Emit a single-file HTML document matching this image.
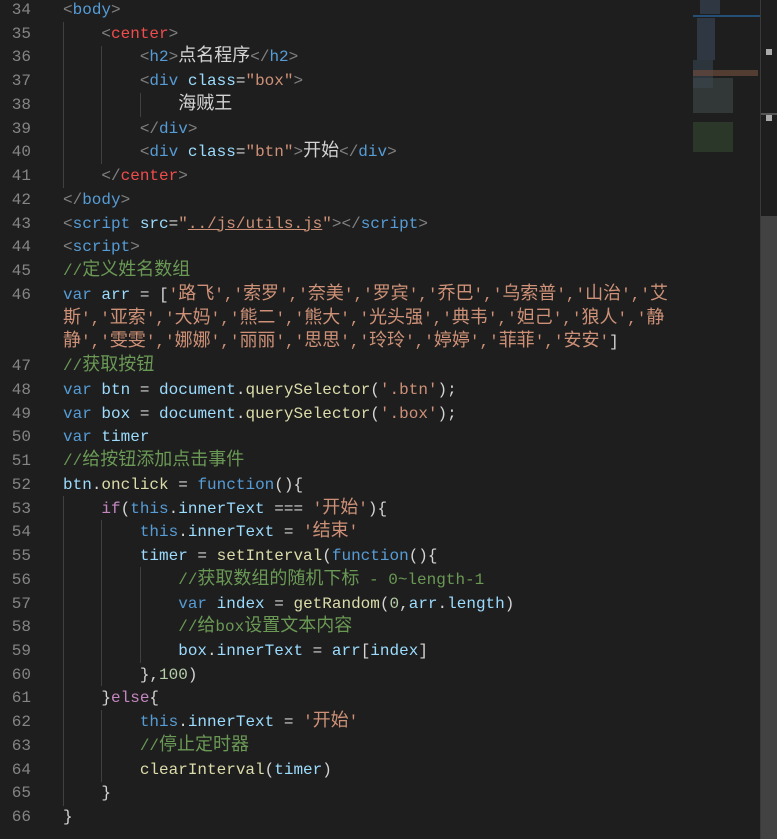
<!DOCTYPE html>
<html><head><meta charset="utf-8"><style>
html,body{margin:0;padding:0;background:#1e1e1e;width:777px;height:839px;overflow:hidden}
.r{position:absolute;left:0;height:23.74px;line-height:23.74px;white-space:pre;font-family:"Liberation Mono",monospace;font-size:16px;color:#d4d4d4;overflow:visible}
.n{position:absolute;left:0;width:31px;text-align:right;color:#858585}
.t{position:absolute;left:63px}
i{font-style:normal;font-family:"Noto Sans CJK SC",sans-serif;font-size:18px;letter-spacing:0;line-height:0;vertical-align:baseline}
.g{color:#808080}.b{color:#569cd6}.a{color:#9cdcfe}.s{color:#ce9178}.red{color:#f14c4c}.c{color:#6a9955}.f{color:#dcdcaa}.k{color:#c586c0}.m{color:#b5cea8}.w{color:#d4d4d4}
.u{text-decoration:underline}
.ig{position:absolute;width:1px;background:#404040}
</style></head><body>
<div class="ig" style="left:63px;top:22px;height:166px"></div>
<div class="ig" style="left:101px;top:46px;height:118px"></div>
<div class="ig" style="left:140px;top:93px;height:24px"></div>
<div class="ig" style="left:63px;top:496px;height:310px"></div>
<div class="ig" style="left:101px;top:520px;height:166px"></div>
<div class="ig" style="left:101px;top:710px;height:72px"></div>
<div class="ig" style="left:140px;top:567px;height:96px"></div>

<div id="code" style="position:absolute;left:0;top:-1px;width:690px">
<div class="r" style="top:0px"><span class="n">34</span><span class="t"><span class="g">&lt;</span><span class="b">body</span><span class="g">&gt;</span></span></div>
<div class="r" style="top:23.74px"><span class="n">35</span><span class="t">    <span class="g">&lt;</span><span class="red">center</span><span class="g">&gt;</span></span></div>
<div class="r" style="top:47.48px"><span class="n">36</span><span class="t">        <span class="g">&lt;</span><span class="b">h2</span><span class="g">&gt;</span><i>点名程序</i><span class="g">&lt;/</span><span class="b">h2</span><span class="g">&gt;</span></span></div>
<div class="r" style="top:71.22px"><span class="n">37</span><span class="t">        <span class="g">&lt;</span><span class="b">div</span> <span class="a">class</span>=<span class="s">"box"</span><span class="g">&gt;</span></span></div>
<div class="r" style="top:94.96px"><span class="n">38</span><span class="t">            <i>海贼王</i></span></div>
<div class="r" style="top:118.7px"><span class="n">39</span><span class="t">        <span class="g">&lt;/</span><span class="b">div</span><span class="g">&gt;</span></span></div>
<div class="r" style="top:142.44px"><span class="n">40</span><span class="t">        <span class="g">&lt;</span><span class="b">div</span> <span class="a">class</span>=<span class="s">"btn"</span><span class="g">&gt;</span><i>开始</i><span class="g">&lt;/</span><span class="b">div</span><span class="g">&gt;</span></span></div>
<div class="r" style="top:166.18px"><span class="n">41</span><span class="t">    <span class="g">&lt;/</span><span class="red">center</span><span class="g">&gt;</span></span></div>
<div class="r" style="top:189.92px"><span class="n">42</span><span class="t"><span class="g">&lt;/</span><span class="b">body</span><span class="g">&gt;</span></span></div>
<div class="r" style="top:213.66px"><span class="n">43</span><span class="t"><span class="g">&lt;</span><span class="b">script</span> <span class="a">src</span>=<span class="s">"<span class="u">../js/utils.js</span>"</span><span class="g">&gt;&lt;/</span><span class="b">script</span><span class="g">&gt;</span></span></div>
<div class="r" style="top:237.4px"><span class="n">44</span><span class="t"><span class="g">&lt;</span><span class="b">script</span><span class="g">&gt;</span></span></div>
<div class="r" style="top:261.14px"><span class="n">45</span><span class="t"><span class="c">//<i>定义姓名数组</i></span></span></div>
<div class="r" style="top:284.88px"><span class="n">46</span><span class="t"><span class="b">var</span> <span class="a">arr</span> = [<span class="s">'<i>路飞</i>','<i>索罗</i>','<i>奈美</i>','<i>罗宾</i>','<i>乔巴</i>','<i>乌索普</i>','<i>山治</i>','<i>艾</i></span></span></div>
<div class="r" style="top:308.62px"><span class="t"><span class="s"><i>斯</i>','<i>亚索</i>','<i>大妈</i>','<i>熊二</i>','<i>熊大</i>','<i>光头强</i>','<i>典韦</i>','<i>妲己</i>','<i>狼人</i>','<i>静</i></span></span></div>
<div class="r" style="top:332.36px"><span class="t"><span class="s"><i>静</i>','<i>雯雯</i>','<i>娜娜</i>','<i>丽丽</i>','<i>思思</i>','<i>玲玲</i>','<i>婷婷</i>','<i>菲菲</i>','<i>安安</i>'</span>]</span></div>
<div class="r" style="top:356.1px"><span class="n">47</span><span class="t"><span class="c">//<i>获取按钮</i></span></span></div>
<div class="r" style="top:379.84px"><span class="n">48</span><span class="t"><span class="b">var</span> <span class="a">btn</span> = <span class="a">document</span>.<span class="f">querySelector</span>(<span class="s">'.btn'</span>);</span></div>
<div class="r" style="top:403.58px"><span class="n">49</span><span class="t"><span class="b">var</span> <span class="a">box</span> = <span class="a">document</span>.<span class="f">querySelector</span>(<span class="s">'.box'</span>);</span></div>
<div class="r" style="top:427.32px"><span class="n">50</span><span class="t"><span class="b">var</span> <span class="a">timer</span></span></div>
<div class="r" style="top:451.06px"><span class="n">51</span><span class="t"><span class="c">//<i>给按钮添加点击事件</i></span></span></div>
<div class="r" style="top:474.8px"><span class="n">52</span><span class="t"><span class="a">btn</span>.<span class="f">onclick</span> = <span class="b">function</span>(){</span></div>
<div class="r" style="top:498.54px"><span class="n">53</span><span class="t">    <span class="k">if</span>(<span class="b">this</span>.<span class="a">innerText</span> === <span class="s">'<i>开始</i>'</span>){</span></div>
<div class="r" style="top:522.28px"><span class="n">54</span><span class="t">        <span class="b">this</span>.<span class="a">innerText</span> = <span class="s">'<i>结束</i>'</span></span></div>
<div class="r" style="top:546.02px"><span class="n">55</span><span class="t">        <span class="a">timer</span> = <span class="f">setInterval</span>(<span class="b">function</span>(){</span></div>
<div class="r" style="top:569.76px"><span class="n">56</span><span class="t">            <span class="c">//<i>获取数组的随机下标</i> - 0~length-1</span></span></div>
<div class="r" style="top:593.5px"><span class="n">57</span><span class="t">            <span class="b">var</span> <span class="a">index</span> = <span class="f">getRandom</span>(<span class="m">0</span>,<span class="a">arr</span>.<span class="a">length</span>)</span></div>
<div class="r" style="top:617.24px"><span class="n">58</span><span class="t">            <span class="c">//<i>给</i>box<i>设置文本内容</i></span></span></div>
<div class="r" style="top:640.98px"><span class="n">59</span><span class="t">            <span class="a">box</span>.<span class="a">innerText</span> = <span class="a">arr</span>[<span class="a">index</span>]</span></div>
<div class="r" style="top:664.72px"><span class="n">60</span><span class="t">        },<span class="m">100</span>)</span></div>
<div class="r" style="top:688.46px"><span class="n">61</span><span class="t">    }<span class="k">else</span>{</span></div>
<div class="r" style="top:712.2px"><span class="n">62</span><span class="t">        <span class="b">this</span>.<span class="a">innerText</span> = <span class="s">'<i>开始</i>'</span></span></div>
<div class="r" style="top:735.94px"><span class="n">63</span><span class="t">        <span class="c">//<i>停止定时器</i></span></span></div>
<div class="r" style="top:759.68px"><span class="n">64</span><span class="t">        <span class="f">clearInterval</span>(<span class="a">timer</span>)</span></div>
<div class="r" style="top:783.42px"><span class="n">65</span><span class="t">    }</span></div>
<div class="r" style="top:807.16px"><span class="n">66</span><span class="t">}</span></div>
</div>

<!-- minimap -->
<div style="position:absolute;left:693px;top:15px;width:67px;height:2px;background:#264f78"></div>
<div style="position:absolute;left:700px;top:0;width:20px;height:14px;background:#3a4a5a;opacity:.6"></div>
<div style="position:absolute;left:697px;top:18px;width:18px;height:42px;background:#3a4a5a;opacity:.6"></div>
<div style="position:absolute;left:693px;top:60px;width:20px;height:28px;background:#3a4a5a;opacity:.5"></div>
<div style="position:absolute;left:693px;top:70px;width:65px;height:6px;background:#6a4a3a;opacity:.7"></div>
<div style="position:absolute;left:693px;top:78px;width:40px;height:35px;background:#3f4a4a;opacity:.6"></div>
<div style="position:absolute;left:693px;top:122px;width:40px;height:30px;background:#344a30;opacity:.6"></div>
<!-- scrollbar -->
<div style="position:absolute;left:760px;top:0;width:1px;height:839px;background:#3a3a3a"></div>
<div style="position:absolute;left:761px;top:113px;width:16px;height:2px;background:#555"></div>
<div style="position:absolute;left:766px;top:49px;width:6px;height:6px;background:#aaa"></div>
<div style="position:absolute;left:766px;top:115px;width:6px;height:6px;background:#aaa"></div>
<div style="position:absolute;left:761px;top:216px;width:16px;height:623px;background:#424242"></div>
</body></html>
